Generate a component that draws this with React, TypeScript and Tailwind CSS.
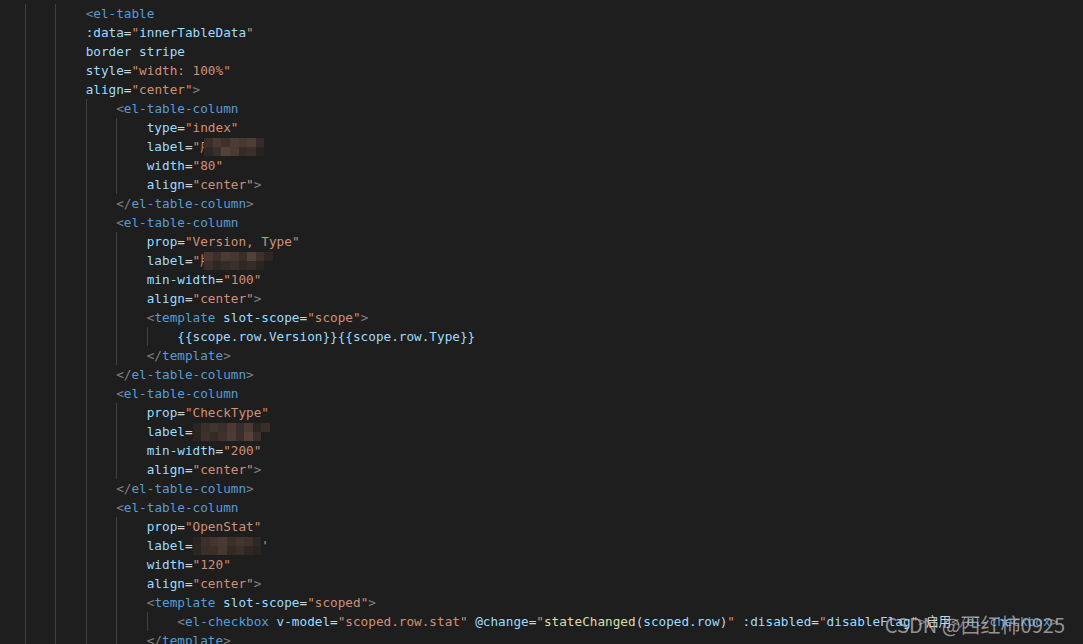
type Tok = [string, string];

const C: Record<string, string> = {
  g: "text-[#808080]",
  t: "text-[#569cd6]",
  a: "text-[#9cdcfe]",
  s: "text-[#ce9178]",
  w: "text-[#d4d4d4]",
  f: "text-[#dcdcaa]",
};

const mosaics: Record<string, string[][]> = {
  m1: [
    ["#3a2e29", "#4a3932", "#3e302b", "#4d3c35", "#473831", "#4f3e36", "#352b28"],
    ["#2f2724", "#3a2f2b", "#54423a", "#4a3a33", "#352c28", "#3a2f2b", "#262220"],
  ],
  m2: [
    ["#4a3932", "#3d302b", "#4c3b34", "#463730", "#3a2e29", "#52403a", "#3e312c", "#2e2623"],
    ["#3b2f2a", "#2e2623", "#342a26", "#3a2f2a", "#2f2724", "#352b27", "#2a2421", "#1e1e1e"],
  ],
  m3: [
    ["#2a2522", "#3a2e29", "#403330", "#3a2f2a", "#4a3a33", "#35302c", "#4a3a34", "#2c2623", "#3a2e28"],
    ["#2a2421", "#3e312c", "#342a26", "#3f322c", "#4d3c35", "#3b2f2a", "#54423a", "#3a2f2a", "#1e1e1e"],
  ],
  m4: [
    ["#2a2421", "#3d302b", "#433530", "#4a3a33", "#3c302b", "#44362f", "#3d312c", "#2e2724"],
    ["#2b2522", "#3a2e29", "#3c2f2a", "#473832", "#332a26", "#3b2f2a", "#2f2724", "#2a2421"],
  ],
};

function Mosaic({ id }: { id: string }) {
  const rows = mosaics[id];
  return (
    <span className="inline-flex flex-col align-top pt-[1px]">
      {rows.map((row, i) => (
        <span key={i} className="flex">
          {row.map((c, j) => (
            <span key={j} className="block h-[9px] w-[8.6px]" style={{ backgroundColor: c }} />
          ))}
        </span>
      ))}
    </span>
  );
}

type Line = { lv: number; toks: Tok[]; mosaic?: string; cut?: string; tail?: Tok[] };

const lines: Line[] = [
  { lv: 3, toks: [["<", "g"], ["el-table", "t"]] },
  { lv: 3, toks: [[":data", "a"], ["=", "w"], ['"', "s"], ["innerTableData", "a"], ['"', "s"]] },
  { lv: 3, toks: [["border stripe", "a"]] },
  { lv: 3, toks: [["style", "a"], ["=", "w"], ['"width: 100%"', "s"]] },
  { lv: 3, toks: [["align", "a"], ["=", "w"], ['"center"', "s"], [">", "g"]] },
  { lv: 4, toks: [["<", "g"], ["el-table-column", "t"]] },
  { lv: 5, toks: [["type", "a"], ["=", "w"], ['"index"', "s"]] },
  { lv: 5, toks: [["label", "a"], ["=", "w"], ['"', "s"]], cut: "序", mosaic: "m1" },
  { lv: 5, toks: [["width", "a"], ["=", "w"], ['"80"', "s"]] },
  { lv: 5, toks: [["align", "a"], ["=", "w"], ['"center"', "s"], [">", "g"]] },
  { lv: 4, toks: [["</", "g"], ["el-table-column", "t"], [">", "g"]] },
  { lv: 4, toks: [["<", "g"], ["el-table-column", "t"]] },
  { lv: 5, toks: [["prop", "a"], ["=", "w"], ['"Version, Type"', "s"]] },
  { lv: 5, toks: [["label", "a"], ["=", "w"], ['"', "s"]], cut: "版", mosaic: "m2" },
  { lv: 5, toks: [["min-width", "a"], ["=", "w"], ['"100"', "s"]] },
  { lv: 5, toks: [["align", "a"], ["=", "w"], ['"center"', "s"], [">", "g"]] },
  { lv: 5, toks: [["<", "g"], ["template", "t"], [" slot-scope", "a"], ["=", "w"], ['"scope"', "s"], [">", "g"]] },
  { lv: 6, toks: [["{{scope.row.Version}}{{scope.row.Type}}", "a"]] },
  { lv: 5, toks: [["</", "g"], ["template", "t"], [">", "g"]] },
  { lv: 4, toks: [["</", "g"], ["el-table-column", "t"], [">", "g"]] },
  { lv: 4, toks: [["<", "g"], ["el-table-column", "t"]] },
  { lv: 5, toks: [["prop", "a"], ["=", "w"], ['"CheckType"', "s"]] },
  { lv: 5, toks: [["label", "a"], ["=", "w"]], mosaic: "m3" },
  { lv: 5, toks: [["min-width", "a"], ["=", "w"], ['"200"', "s"]] },
  { lv: 5, toks: [["align", "a"], ["=", "w"], ['"center"', "s"], [">", "g"]] },
  { lv: 4, toks: [["</", "g"], ["el-table-column", "t"], [">", "g"]] },
  { lv: 4, toks: [["<", "g"], ["el-table-column", "t"]] },
  { lv: 5, toks: [["prop", "a"], ["=", "w"], ['"OpenStat"', "s"]] },
  { lv: 5, toks: [["label", "a"], ["=", "w"]], mosaic: "m4", tail: [["'", "s"]] },
  { lv: 5, toks: [["width", "a"], ["=", "w"], ['"120"', "s"]] },
  { lv: 5, toks: [["align", "a"], ["=", "w"], ['"center"', "s"], [">", "g"]] },
  { lv: 5, toks: [["<", "g"], ["template", "t"], [" slot-scope", "a"], ["=", "w"], ['"scoped"', "s"], [">", "g"]] },
  {
    lv: 6,
    toks: [
      ["<", "g"], ["el-checkbox", "t"], [" v-model", "a"], ["=", "w"], ['"scoped.row.stat"', "s"],
      [" @change", "a"], ["=", "w"], ['"', "s"], ["stateChanged", "f"], ["(", "w"], ["scoped.row", "a"],
      [")", "w"], ['"', "s"], [" :disabled", "a"], ["=", "w"], ['"', "s"], ["disableFlag", "a"], ['"', "s"],
      [">", "g"], ["启用", "w"], ["</", "g"], ["el-checkbox", "t"], [">", "g"],
    ],
  },
  { lv: 5, toks: [["</", "g"], ["template", "t"], [">", "g"]] },
];

function Toks({ toks }: { toks: Tok[] }) {
  return (
    <>
      {toks.map(([text, c], i) => (
        <span key={i} className={C[c]}>
          {text}
        </span>
      ))}
    </>
  );
}

export default function App() {
  return (
    <div className="relative h-[644px] w-full overflow-hidden bg-[#1e1e1e]">
      <div
        className="ml-[-6px] pt-[4px] text-[12.7px] leading-[19px] whitespace-pre"
        style={{ fontFamily: '"DejaVu Sans Mono", "Noto Sans CJK SC", monospace' }}
      >
        {lines.map((ln, i) => (
          <div key={i} className="flex h-[19px]">
            {Array.from({ length: ln.lv }).map((_, k) => (
              <span
                key={k}
                className={k === 0 ? "block w-[4ch] shrink-0" : "block w-[4ch] shrink-0 border-l border-[#404040]"}
              />
            ))}
            <span>
              <Toks toks={ln.toks} />
              {ln.cut && (
                <span className="inline-block w-[4px] overflow-hidden align-top text-[#ce9178]">{ln.cut}</span>
              )}
              {ln.mosaic && <Mosaic id={ln.mosaic} />}
              {ln.tail && <Toks toks={ln.tail} />}
            </span>
          </div>
        ))}
      </div>
      <div
        className="absolute right-[18px] bottom-[7px] text-[20px] leading-[24px] text-[#c8c8c8]/70"
        style={{ fontFamily: '"Noto Sans CJK SC", "Noto Sans", sans-serif' }}
      >
        CSDN @西红柿0925
      </div>
    </div>
  );
}
